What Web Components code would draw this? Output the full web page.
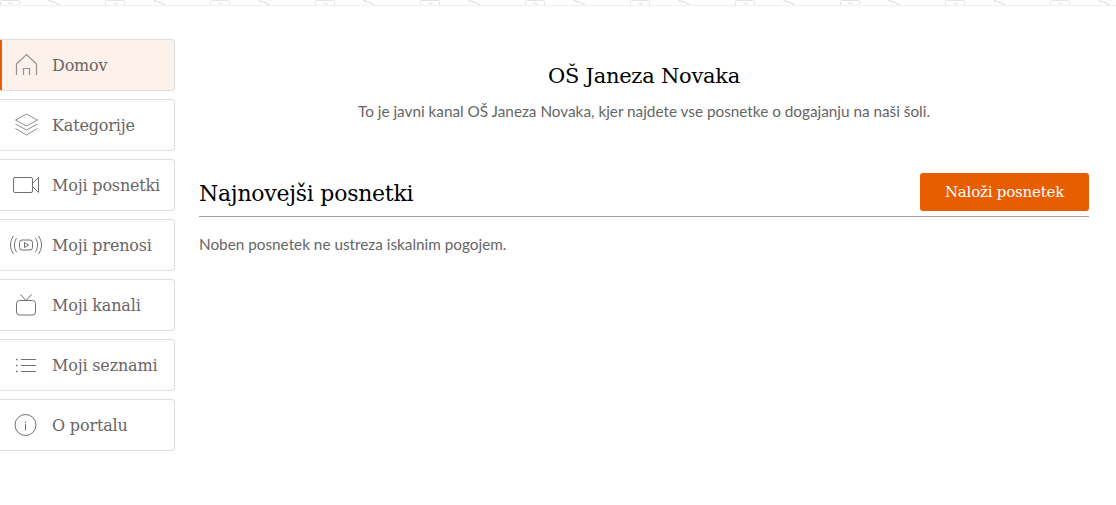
<!DOCTYPE html>
<html><head><meta charset="utf-8"><style>
html,body{margin:0;padding:0;background:#fff}
body{width:1116px;height:505px;overflow:hidden}
</style></head><body>
<app-shell>
  <side-nav slot="nav">
    <nav-item active label="Domov"><svg viewBox="0 0 32 32" width="32" height="32" fill="none" stroke="#949494" stroke-width="1.2"><path d="M6.500 26V15.500Q6.500 15 7 14.500L16.500 5.500 26 14.500Q26.500 15 26.500 15.500V26"/><path d="M13.500 26v-6.500h6V26"/></svg></nav-item>
    <nav-item label="Kategorije"><svg viewBox="0 0 32 32" width="32" height="32" fill="none" stroke="#8e8e8e" stroke-width="1"><path d="M16.500 5l11 6-11 6-11-6z"/><path d="M5.500 15l11 6 11-6"/><path d="M5.500 19.500l11 6.500 11-6.500"/></svg></nav-item>
    <nav-item label="Moji posnetki"><svg viewBox="0 0 32 32" width="32" height="32" fill="none" stroke="#707070" stroke-width="1"><rect x="3.500" y="8.500" width="19" height="15" rx="1.500"/><path d="M22.500 14.500l6-6v15l-6-6"/></svg></nav-item>
    <nav-item label="Moji prenosi"><svg viewBox="0 0 32 32" width="32" height="32" fill="none" stroke="#707070" stroke-width="1"><rect x="9.500" y="11" width="13" height="10" rx="2.500"/><path d="M14.500 13.500l4 2.500-4 2.500z"/><path d="M6.500 9c-2.800 4.500-2.800 9.500 0 14M3.500 7c-4 6-4 12 0 18M25.500 9c2.800 4.500 2.800 9.500 0 14M28.500 7c4 6 4 12 0 18"/></svg></nav-item>
    <nav-item label="Moji kanali"><svg viewBox="0 0 32 32" width="32" height="32" fill="none" stroke="#707070" stroke-width="1"><rect x="6.500" y="11.500" width="19" height="14.500" rx="3"/><path d="M10.500 5.500l5.500 6 5.500-6"/></svg></nav-item>
    <nav-item label="Moji seznami"><svg viewBox="0 0 32 32" width="32" height="32" fill="none" stroke="#707070" stroke-width="1"><path d="M11 10.500h15M11 16.500h15M11 22.500h15"/><path d="M6 10.500h1.500M6 16.500h1.500M6 22.500h1.500" stroke-width="1.500"/></svg></nav-item>
    <nav-item label="O portalu"><svg viewBox="0 0 32 32" width="32" height="32" fill="none" stroke="#707070" stroke-width="1"><circle cx="15.500" cy="16" r="10.500"/><path d="M15.500 15v6.500M15.500 12.500v1.500"/></svg></nav-item>
  </side-nav>
  <channel-page></channel-page>
</app-shell>
<script>
function def(name, css, html, init){
  customElements.define(name, class extends HTMLElement{
    connectedCallback(){
      if(this.shadowRoot) return;
      const r=this.attachShadow({mode:'open'});
      r.innerHTML='<style>'+css+'</style>'+html;
      if(init) init(this,r);
    }
  });
}
const SERIF='"DejaVu Serif","Liberation Serif",serif';
const SANS='Lato,"Open Sans",sans-serif';
def('app-shell',`
:host{display:block;width:1116px;height:505px;box-sizing:border-box;--serif:${SERIF};--sans:${SANS}}
.main{display:flex;padding-top:33px;align-items:flex-start}
.c{flex:1}
`,`<top-strip></top-strip><div class="main"><slot name="nav"></slot><div class="c"><slot></slot></div></div>`);
def('top-strip',`
:host{display:block;height:6px;box-sizing:border-box;border-bottom:1px solid #f0f0f0;overflow:hidden}
svg{display:block}
`,`<svg width="1116" height="5"><defs><pattern id="p" width="105" height="5" patternUnits="userSpaceOnUse"><path d="M.500 5V1.500q0-1 1-1h17q1 0 1 1V5M8 3.500h4V5" fill="none" stroke="#e4e4e4"/><path d="M49 0v1q4 0 7 2l4 2" fill="none" stroke="#d8d8d8"/></pattern></defs><rect width="1116" height="5" fill="url(#p)"/></svg>`);
def('side-nav',`
:host{display:flex;flex-direction:column;gap:8px;width:175px;flex:none}
`,`<slot></slot>`);
def('nav-item',`
:host{display:flex;align-items:center;height:52px;box-sizing:border-box;border:1px solid #ddd;border-left:0;border-radius:0 4px 4px 0;background:#fff;color:#6a6565;font:16px/1 var(--serif);letter-spacing:-.17px;padding-left:10px;gap:10px;white-space:nowrap}
:host([active]){background:#fcf1eb;box-shadow:inset 2px 0 0 #e85d00}
.i{width:32px;height:32px;flex:none;display:block}
.t{padding-top:2px}
`,`<div class="i"><slot></slot></div><span class="t"></span>`,(h,r)=>{r.querySelector('.t').textContent=h.getAttribute('label')});
def('channel-page',`
:host{display:block;padding:0 27px 0 24px;font-family:var(--sans)}
header{text-align:center;padding-top:22px}
h1{margin:0;font:400 21px/30px var(--serif);letter-spacing:-.25px;color:#000}
p.d{margin:10px 0 0;font-size:15.3px;line-height:20px;color:#666}
.bar{display:flex;justify-content:space-between;align-items:flex-end;margin-top:52px;border-bottom:1px solid #a0a0a0;height:44px;padding-bottom:5px;box-sizing:border-box}
h2{margin:0;font:400 22px/34px var(--serif);letter-spacing:-.26px;color:#000}
button{all:unset;box-sizing:border-box;width:169px;height:38px;background:#e85d00;border-radius:3px;color:#fff;text-align:center;font:15px/38px var(--serif);letter-spacing:-.2px}
p.e{margin:17px 0 0;font-size:15.3px;line-height:20px;color:#666}
`,`<header><h1>OŠ Janeza Novaka</h1><p class="d">To je javni kanal OŠ Janeza Novaka, kjer najdete vse posnetke o dogajanju na naši šoli.</p></header>
<div class="bar"><h2>Najnovejši posnetki</h2><button>Naloži posnetek</button></div>
<p class="e">Noben posnetek ne ustreza iskalnim pogojem.</p>`);
</script>
</body></html>
